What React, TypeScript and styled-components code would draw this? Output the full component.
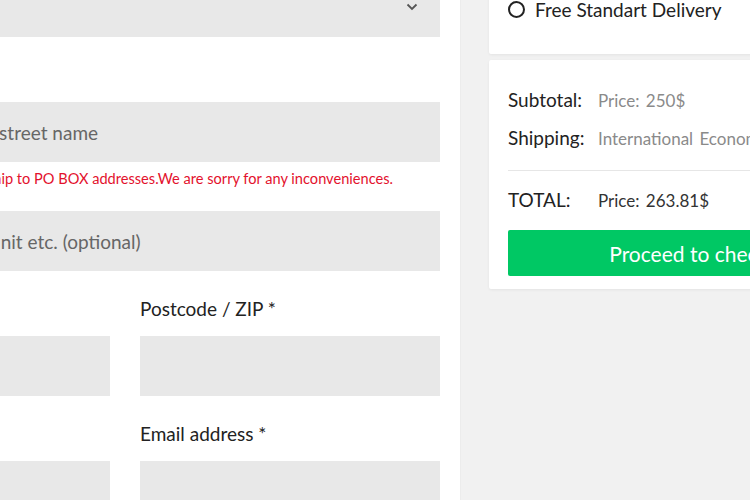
import React from "react";
import styled, { createGlobalStyle } from "styled-components";

const Global = createGlobalStyle`
  html, body { margin: 0; padding: 0; overflow: hidden; background: #fff; }
  body { font-family: Lato, "Open Sans", sans-serif; }
  * { box-sizing: border-box; }
`;

const Page = styled.div`
  display: flex;
  width: 1200px;
  height: 500px;
  margin-left: -190px;
`;

const Form = styled.section`
  width: 650px;
  padding-right: 20px;
  flex: none;
  display: flex;
  flex-direction: column;
  margin-top: -23px;
  & > * {
    flex: none;
  }
`;

const Field = styled.div<{ $mt?: number }>`
  display: flex;
  flex-direction: column;
  margin-top: ${(p) => p.$mt ?? 0}px;
`;

const Label = styled.label`
  font-size: 19px;
  color: #222;
  height: 26px;
  line-height: 26px;
  margin-bottom: 14px;
`;

const Input = styled.div<{ $pad?: number }>`
  height: 60px;
  flex: none;
  background: #e8e8e8;
  display: flex;
  align-items: center;
  padding: 0 22px 0 ${(p) => p.$pad ?? 20}px;
  font-size: 19px;
  color: #666;
  white-space: nowrap;
  justify-content: space-between;
`;

const Chevron = styled.svg`
  width: 12px;
  height: 8px;
`;

const Error = styled.div<{ $pad: number }>`
  color: #e3112d;
  font-size: 14.6px;
  line-height: 18px;
  margin-top: 8px;
  padding-left: ${(p) => p.$pad}px;
  white-space: nowrap;
`;

const Grid = styled.div`
  display: grid;
  grid-template-columns: 300px 300px;
  column-gap: 30px;
  row-gap: 25px;
  margin-top: 25px;
`;

const Aside = styled.aside`
  flex: 1;
  background: #f1f1f1;
  border-left: 1px solid #ececec;
  padding-left: 28px;
  display: flex;
  flex-direction: column;
  gap: 6px;
  & > * {
    flex: none;
  }
`;

const Card = styled.div`
  width: 430px;
  background: #fff;
  box-shadow: 0 1px 3px rgba(0, 0, 0, 0.06);
  border-radius: 2px;
`;

const DeliveryCard = styled(Card)`
  margin-top: -40px;
  height: 94px;
  padding: 38px 0 0 19px;
`;

const Radio = styled.label`
  display: flex;
  align-items: center;
  gap: 10px;
  font-size: 19px;
  color: #222;
`;

const Circle = styled.span`
  width: 17px;
  height: 17px;
  border: 2px solid #222;
  border-radius: 50%;
`;

const SummaryCard = styled(Card)`
  padding: 28px 19px 13px 19px;
`;

const Row = styled.div`
  display: flex;
  align-items: baseline;
  height: 38px;
`;

const Key = styled.span`
  font-size: 19px;
  color: #222;
  width: 90px;
  flex: none;
`;

const Val = styled.span<{ $dark?: boolean }>`
  font-size: 17px;
  color: ${(p) => (p.$dark ? "#333" : "#8a8a8a")};
  white-space: nowrap;
  word-spacing: 2px;
`;

const Divider = styled.hr`
  border: 0;
  border-top: 1px solid #e6e6e6;
  margin: 6px 0 17px 0;
`;

const Button = styled.button`
  margin-top: 4px;
  width: 100%;
  height: 46px;
  border: 0;
  border-radius: 2px;
  background: #00c864;
  color: #fff;
  font-family: inherit;
  font-size: 21px;
`;

export default function App() {
  return (
    <>
      <Global />
      <Page>
        <Form>
          <Input>
            <span>Country</span>
            <Chevron viewBox="0 0 12 8">
              <path d="M1.5 1.5 L6 6 L10.5 1.5" fill="none" stroke="#555" strokeWidth="1.8" />
            </Chevron>
          </Input>
          <Field $mt={25}>
            <Label>Street address *</Label>
            <Input $pad={26}>House number and street name</Input>
            <Error $pad={13}>Unfortunately, we do not ship to PO BOX addresses.We are sorry for any inconveniences.</Error>
          </Field>
          <Field $mt={23}>
            <Input $pad={32}>Apartment, suite, unit etc. (optional)</Input>
          </Field>
          <Grid>
            <Field>
              <Label>Town / City *</Label>
              <Input />
            </Field>
            <Field>
              <Label>Postcode / ZIP *</Label>
              <Input />
            </Field>
            <Field>
              <Label>Phone *</Label>
              <Input />
            </Field>
            <Field>
              <Label>Email address *</Label>
              <Input />
            </Field>
          </Grid>
        </Form>
        <Aside>
          <DeliveryCard>
            <Radio>
              <Circle />
              Free Standart Delivery
            </Radio>
          </DeliveryCard>
          <SummaryCard>
            <Row>
              <Key>Subtotal:</Key>
              <Val>Price: 250$</Val>
            </Row>
            <Row>
              <Key>Shipping:</Key>
              <Val>International Economy: 13.81$</Val>
            </Row>
            <Divider />
            <Row>
              <Key>TOTAL:</Key>
              <Val $dark>Price: 263.81$</Val>
            </Row>
            <Button>Proceed to checkout</Button>
          </SummaryCard>
        </Aside>
      </Page>
    </>
  );
}
